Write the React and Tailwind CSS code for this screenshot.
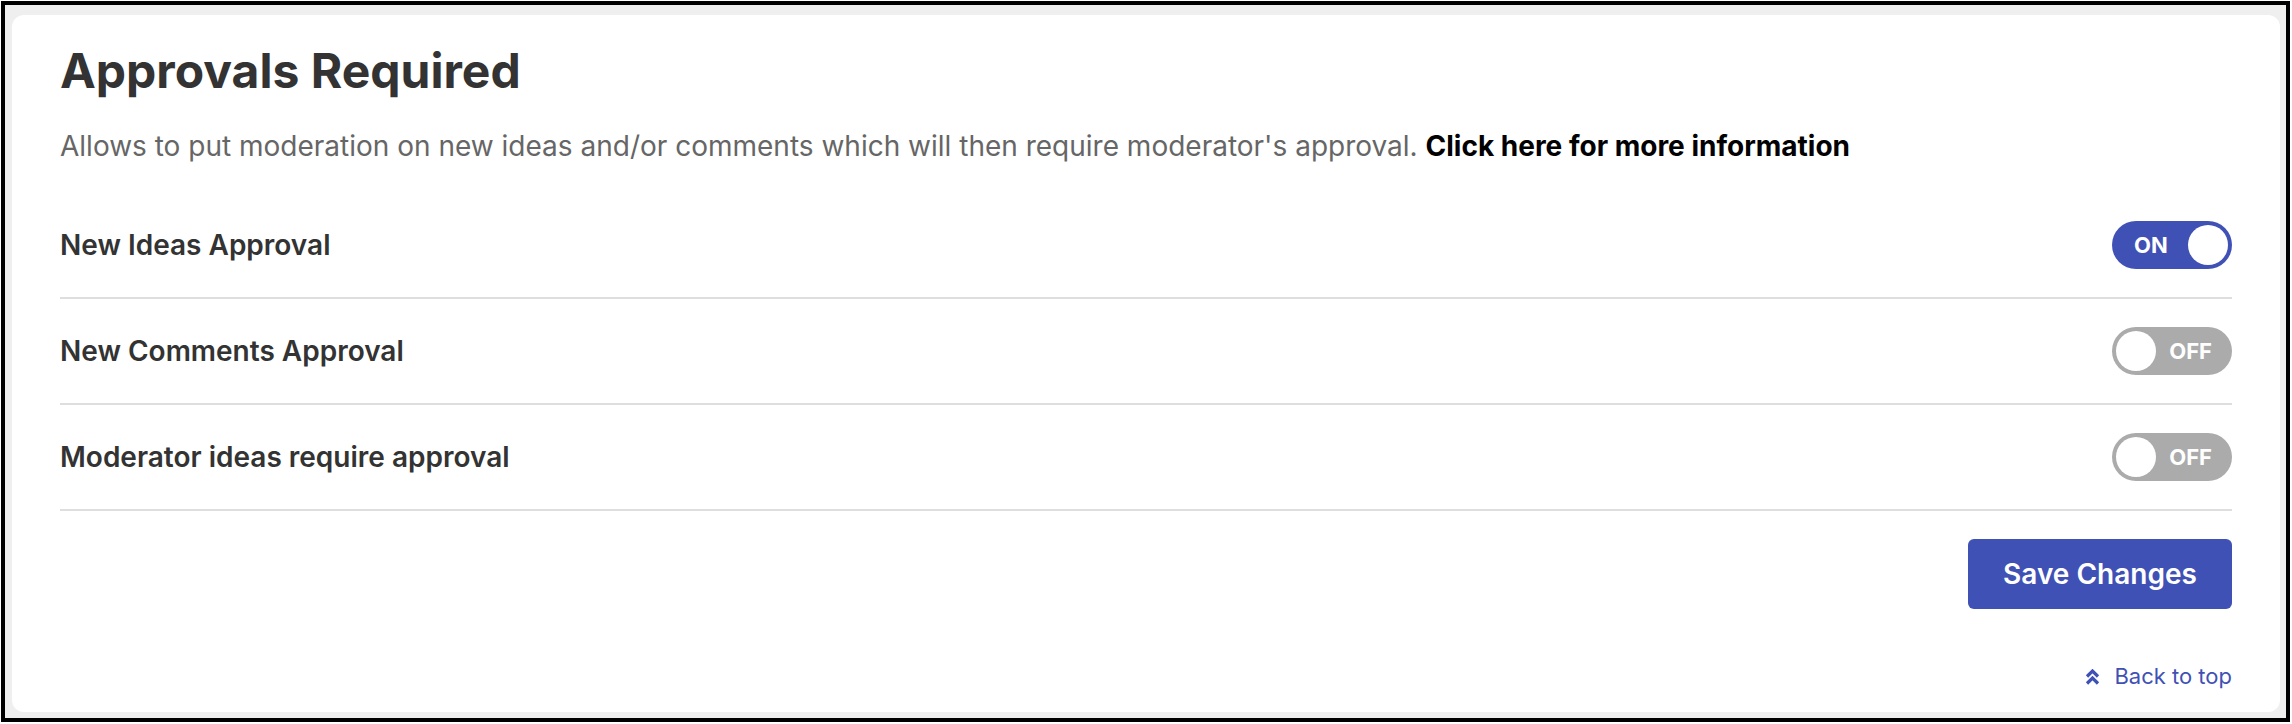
import React, { useState } from 'react';

const rows = [
  { label: 'New Ideas Approval', on: true },
  { label: 'New Comments Approval', on: false },
  { label: 'Moderator ideas require approval', on: false },
];

const Toggle = ({ on, onClick }) => (
  <button
    type="button"
    onClick={onClick}
    className={`relative flex h-[48px] w-[120px] shrink-0 items-center rounded-full ${
      on ? 'bg-[#3f51b5]' : 'bg-[#ababab]'
    }`}
  >
    {on ? (
      <>
        <span className="pl-[22px] text-[22px] font-bold leading-none text-white">ON</span>
        <span className="absolute right-[4px] top-[4px] h-[40px] w-[40px] rounded-full bg-white" />
      </>
    ) : (
      <>
        <span className="absolute left-[4px] top-[4px] h-[40px] w-[40px] rounded-full bg-white" />
        <span className="ml-auto pr-[20px] text-[22px] font-bold leading-none text-white">OFF</span>
      </>
    )}
  </button>
);

const App = () => {
  const [settings, setSettings] = useState(rows);

  const flip = (i) => {
    setSettings(settings.map((s, j) => (j === i ? { ...s, on: !s.on } : s)));
  };

  return (
    <div className="h-[724px] w-[2292px] bg-white pl-px pt-px font-['Inter',sans-serif]">
      <div className="h-[721px] w-[2289px] border-4 border-black bg-[#efefef] pb-[6px] pl-[7px] pr-[6px] pt-[10px]">
        <div className="flex h-full flex-col rounded-[12px] bg-white px-[48px] pt-[27px]">
          {/* Header */}
          <h2 className="text-[48px] font-bold leading-[58px] text-[#333]">
            Approvals Required
          </h2>
          <p className="mt-[28px] text-[28px] leading-[36px] text-[#666]">
            Allows to put moderation on new ideas and/or comments which will then require moderator's
            approval.{' '}
            <a href="#" className="font-bold text-black">
              Click here for more information
            </a>
          </p>

          {/* Settings rows */}
          <div className="mt-[29px]">
            {settings.map((s, i) => (
              <div
                key={s.label}
                className="flex items-center justify-between border-b-2 border-[#dedede] py-[28px]"
              >
                <span className="text-[28px] font-semibold text-[#333]">{s.label}</span>
                <Toggle on={s.on} onClick={() => flip(i)} />
              </div>
            ))}
          </div>

          <div className="mt-[28px] flex justify-end">
            <button
              type="button"
              className="h-[70px] w-[264px] rounded-[6px] bg-[#3f51b5] text-[28px] font-semibold text-white"
            >
              Save Changes
            </button>
          </div>

          <div className="mt-[51px] flex justify-end">
            <a href="#" className="flex items-center gap-[14px] text-[22px] text-[#3f51b5]">
              <svg width="15" height="16" viewBox="0 0 15 16" fill="none" stroke="currentColor" strokeWidth="3.2">
                <path d="M2 7.5 L7.5 2 L13 7.5" />
                <path d="M2 14.5 L7.5 9 L13 14.5" />
              </svg>
              Back to top
            </a>
          </div>
        </div>
      </div>
    </div>
  );
};

export default App;
